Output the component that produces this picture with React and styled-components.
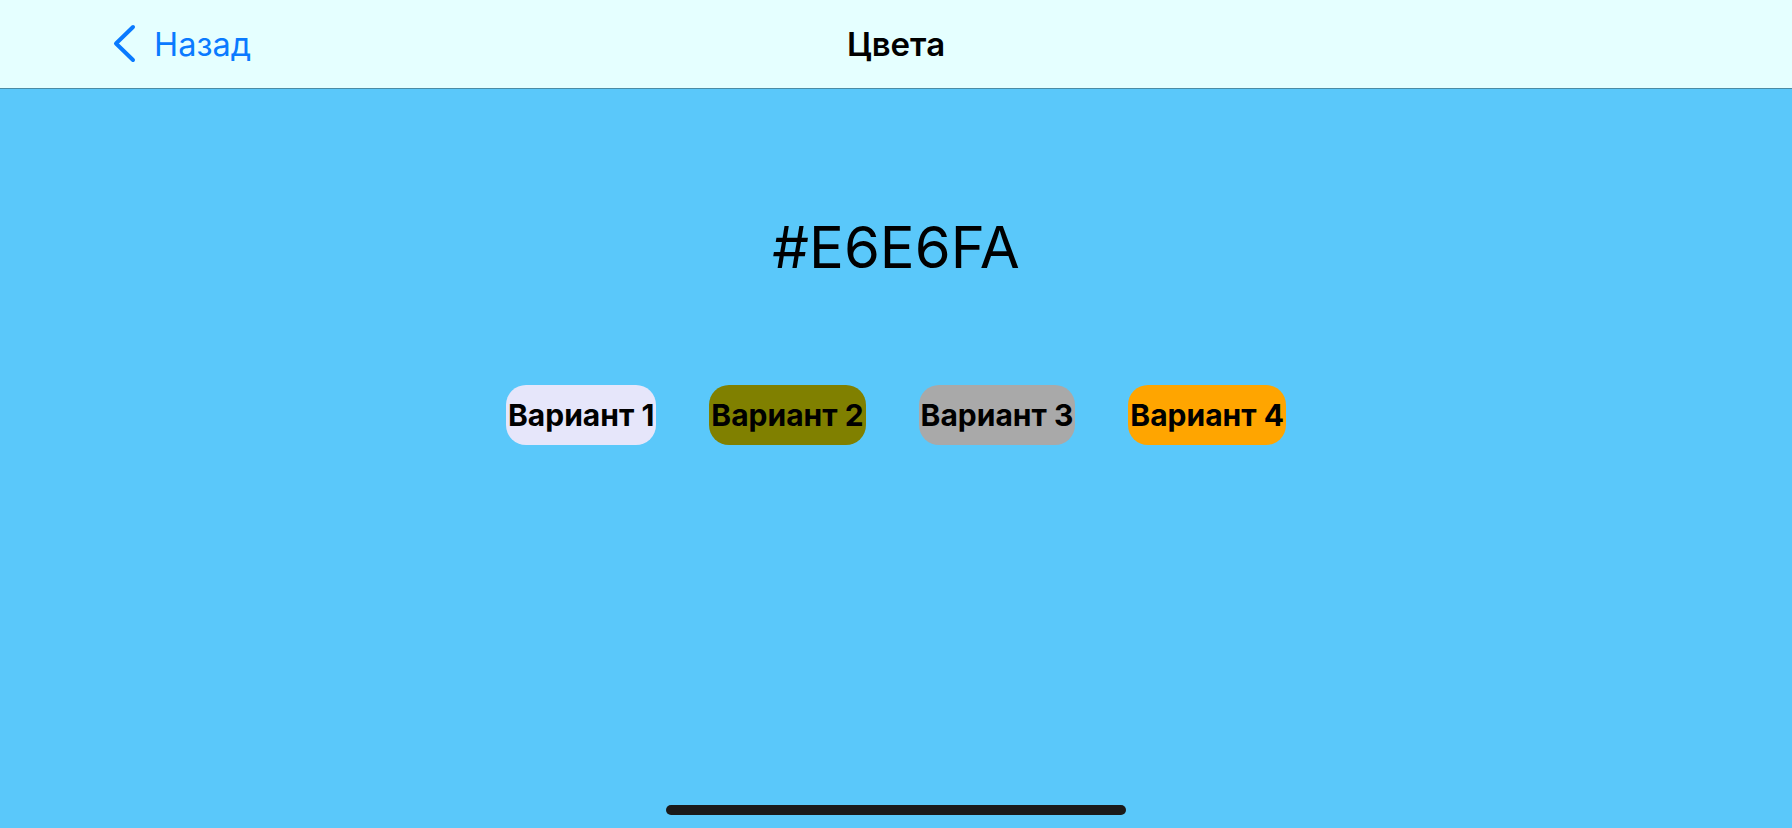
import React from 'react';
import styled, { createGlobalStyle } from 'styled-components';

const GlobalStyle = createGlobalStyle`
  html, body {
    margin: 0;
    padding: 0;
    height: 100%;
  }
  body {
    font-family: Inter, "Noto Sans", "Liberation Sans", sans-serif;
    background: #5ac8fa;
  }
  #root {
    height: 100%;
  }
`;

const Screen = styled.div`
  height: 100vh;
  display: flex;
  flex-direction: column;
  background: #5ac8fa;
`;

const NavBar = styled.header`
  height: 88px;
  flex-shrink: 0;
  display: grid;
  grid-template-columns: 1fr auto 1fr;
  align-items: center;
  background: #e5ffff;
  border-bottom: 1px solid #4b8ca5;
`;

const BackButton = styled.button`
  justify-self: start;
  display: flex;
  align-items: center;
  gap: 17px;
  margin-left: 113px;
  padding: 0;
  border: none;
  background: none;
  color: #0a7aff;
  font-family: inherit;
  font-size: 32.5px;
  font-weight: 400;
  cursor: pointer;
`;

const Title = styled.h1`
  margin: 0;
  font-size: 33px;
  font-weight: 600;
  color: #000;
`;

const Content = styled.main`
  flex: 1;
  display: flex;
  flex-direction: column;
  align-items: center;
`;

const HexLabel = styled.div`
  margin-top: 127px;
  font-size: 58px;
  line-height: 62px;
  font-weight: 400;
  color: #000;
`;

const Options = styled.div`
  display: flex;
  gap: 53px;
  margin-top: 107px;
`;

const Option = styled.button`
  height: 60px;
  padding: 0 2px;
  border: none;
  border-radius: 20px;
  background: ${({ $color }) => $color};
  color: #000;
  font-family: inherit;
  font-size: 30px;
  font-weight: 700;
  cursor: pointer;
`;

const HomeArea = styled.div`
  display: flex;
  justify-content: center;
  padding-bottom: 13px;
`;

const HomeBar = styled.div`
  width: 460px;
  height: 10px;
  border-radius: 5px;
  background: #1a1a1a;
`;

const Chevron = () => (
  <svg width="24" height="40" viewBox="0 0 24 40">
    <polyline
      points="20,3 3,19.5 20,36"
      fill="none"
      stroke="#0a7aff"
      strokeWidth="4"
      strokeLinecap="round"
      strokeLinejoin="round"
    />
  </svg>
);

const variants = [
  { label: 'Вариант 1', color: '#e6e6fa' },
  { label: 'Вариант 2', color: '#808000' },
  { label: 'Вариант 3', color: '#a9a9a9' },
  { label: 'Вариант 4', color: '#ffa500' },
];

export default function App() {
  return (
    <Screen>
      <GlobalStyle />
      <NavBar>
        <BackButton>
          <Chevron />
          Назад
        </BackButton>
        <Title>Цвета</Title>
        <div />
      </NavBar>
      <Content>
        <HexLabel>#E6E6FA</HexLabel>
        <Options>
          {variants.map((v) => (
            <Option key={v.label} $color={v.color}>
              {v.label}
            </Option>
          ))}
        </Options>
      </Content>
      <HomeArea>
        <HomeBar />
      </HomeArea>
    </Screen>
  );
}
